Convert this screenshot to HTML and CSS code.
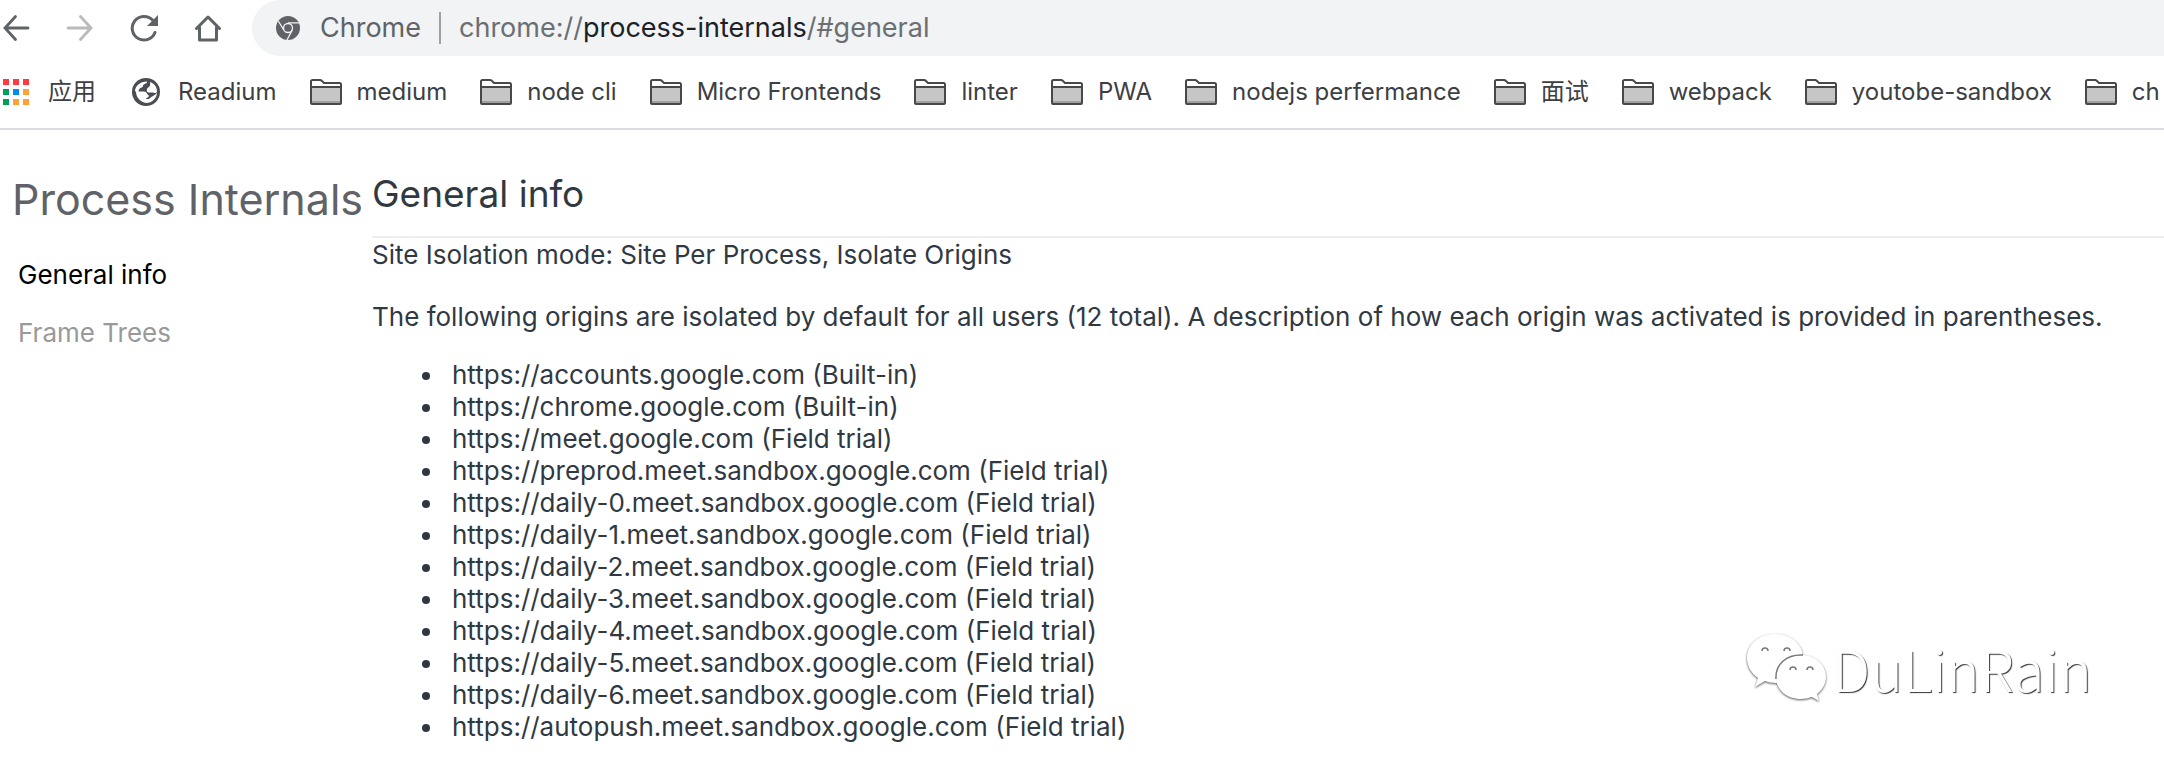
FILE: index.html
```html
<!DOCTYPE html>
<html lang="en">
<head>
  <meta charset="UTF-8">
  <meta name="viewport" content="width=device-width, initial-scale=1.0">
  <title>Process Internals</title>
  <link rel="stylesheet" href="styles.css">
</head>
<body>

  <!-- Shared icons -->
  <svg class="sprite" aria-hidden="true">
    <symbol id="folder" viewBox="0 0 32 26">
      <path d="M1 24V2.5Q1 1 2.5 1H10Q11 1 12 2L14 4H29.5Q31 4 31 5.500V24Q31 25 30 25H2Q1 25 1 24Z" fill="#fff"/>
      <path d="M1 8H31V25H1Z" fill="#c6c6c6"/>
      <path d="M1 22H31V24H1Z" fill="#a0a0a0"/>
      <path d="M1 8H31M1 24V2.500Q1 1 2.500 1H10Q11 1 12 2L14 4H29.500Q31 4 31 5.500V24Q31 25 30 25H2Q1 25 1 24Z" fill="none" stroke="#484848" stroke-width="2"/>
    </symbol>
  </svg>

  <!-- Browser toolbar -->
  <div class="toolbar">
    <button class="tool-btn" aria-label="Back">
      <svg viewBox="0 0 28 28"><path d="M26 14H3M13.500 2.500L3 14l10.500 11.500" fill="none" stroke="#5f6368" stroke-width="2.800" stroke-linecap="round"/></svg>
    </button>
    <button class="tool-btn" aria-label="Forward" disabled>
      <svg viewBox="0 0 28 28"><path d="M2 14H25M14.500 2.500L25 14 14.500 25.500" fill="none" stroke="#bababa" stroke-width="2.800" stroke-linecap="round"/></svg>
    </button>
    <button class="tool-btn" aria-label="Reload">
      <svg viewBox="0 0 28 28"><path d="M25 18.500A11.800 11.800 0 1 1 22.500 6" fill="none" stroke="#5f6368" stroke-width="3" stroke-linecap="round"/><path d="M28 1V12H17Z" fill="#5f6368"/></svg>
    </button>
    <button class="tool-btn" aria-label="Home">
      <svg viewBox="0 0 28 28"><path d="M2.500 14.500L14 3l11.500 11.500M5.500 13V26H22.500V13" fill="none" stroke="#5f6368" stroke-width="3" stroke-linecap="round" stroke-linejoin="round"/></svg>
    </button>
    <div class="omnibox">
      <svg class="chrome-icon" viewBox="0 0 24 24">
        <circle cx="12" cy="12" r="12" fill="#5f6368"/>
        <circle cx="12" cy="12" r="4.500" fill="none" stroke="#f1f3f4" stroke-width="1.300"/>
        <path d="M12 6.800H23M7.800 14L2.300 5M16.300 14L11 24" fill="none" stroke="#f1f3f4" stroke-width="1.300"/>
      </svg>
      <span class="chip">Chrome</span>
      <div class="url" role="textbox" aria-label="Address and search bar" contenteditable="true" spellcheck="false">chrome://<span class="host">process-internals</span>/#general</div>
    </div>
  </div>

  <!-- Bookmarks bar -->
  <nav class="bookmarks">
    <a href="#apps">
      <svg class="apps-icon" viewBox="0 0 26 26">
        <path d="M0 0h6v6H0zM10 0h6v6h-6zM20 0h6v6h-6z" fill="#ff3b41"/>
        <path d="M0 10h6v6H0zM0 20h6v6H0z" fill="#00a05a"/>
        <path d="M10 10h6v6h-6z" fill="#008cf0"/>
        <path d="M20 10h6v6h-6zM10 20h6v6h-6zM20 20h6v6h-6z" fill="#ffa138"/>
      </svg>应用</a>
    <a href="#readium">
      <svg class="globe-icon" viewBox="0 0 28 28">
        <circle cx="14" cy="14" r="14" fill="#4a4e53"/>
        <path d="M3 13.500C3 8 8 3.500 15 3.500C15.500 6 11 5.500 11 8C11 10 7 9 6.500 13.500ZM4 13.500H12C15 13.500 15 17 17 17.500C17 20 14 19 14 21V25C9 24 4 20 4 13.500Z" fill="#fff"/>
        <path d="M18 4C23 6 25 9 25 14C23 16 22 14 19 14.500C16 15 14 14 15 11C16 9 19 9 18 4ZM14 21H17C18 19 23 18 25 14.500C25 20 20 25 14 25Z" fill="#fff"/>
      </svg>Readium</a>
    <a href="#medium"><svg class="folder-icon"><use href="#folder"/></svg>medium</a>
    <a href="#node-cli"><svg class="folder-icon"><use href="#folder"/></svg>node cli</a>
    <a href="#micro-frontends"><svg class="folder-icon"><use href="#folder"/></svg>Micro Frontends</a>
    <a href="#linter"><svg class="folder-icon"><use href="#folder"/></svg>linter</a>
    <a href="#pwa"><svg class="folder-icon"><use href="#folder"/></svg>PWA</a>
    <a href="#nodejs"><svg class="folder-icon"><use href="#folder"/></svg>nodejs perfermance</a>
    <a href="#interview"><svg class="folder-icon"><use href="#folder"/></svg>面试</a>
    <a href="#webpack"><svg class="folder-icon"><use href="#folder"/></svg>webpack</a>
    <a href="#youtobe"><svg class="folder-icon"><use href="#folder"/></svg>youtobe-sandbox</a>
    <a href="#ch"><svg class="folder-icon"><use href="#folder"/></svg>ch</a>
  </nav>

  <!-- Page -->
  <div class="page">
    <div class="sidebar">
      <h1>Process Internals</h1>
      <ul class="tabs">
        <li><a class="selected" href="#general">General info</a></li>
        <li><a href="#web-contents">Frame Trees</a></li>
      </ul>
    </div>

    <div class="content">
      <h2>General info</h2>
      <p class="mode">Site Isolation mode: Site Per Process, Isolate Origins</p>
      <p>The following origins are isolated by default for all users (12 total). A description of how each origin was activated is provided in parentheses.</p>
      <ul class="origins">
        <li>https://accounts.google.com (Built-in)</li>
        <li>https://chrome.google.com (Built-in)</li>
        <li>https://meet.google.com (Field trial)</li>
        <li>https://preprod.meet.sandbox.google.com (Field trial)</li>
        <li>https://daily-0.meet.sandbox.google.com (Field trial)</li>
        <li>https://daily-1.meet.sandbox.google.com (Field trial)</li>
        <li>https://daily-2.meet.sandbox.google.com (Field trial)</li>
        <li>https://daily-3.meet.sandbox.google.com (Field trial)</li>
        <li>https://daily-4.meet.sandbox.google.com (Field trial)</li>
        <li>https://daily-5.meet.sandbox.google.com (Field trial)</li>
        <li>https://daily-6.meet.sandbox.google.com (Field trial)</li>
        <li>https://autopush.meet.sandbox.google.com (Field trial)</li>
      </ul>
    </div>
  </div>

  <!-- Watermark -->
  <div class="watermark">
    <svg class="wechat" viewBox="0 0 82 70">
      <path d="M29 1C13 1 1 11 1 25C1 33 5 40 12 45L9 54L19 48C22 49 26 50 30 50C46 50 57 39 57 25C57 11 45 1 29 1Z"/>
      <path class="front" d="M55 22C41 22 30 31 30 44C30 57 41 66 55 66C59 66 62 65 66 64L73 68L71 61C76 57 80 51 80 44C80 31 69 22 55 22Z"/>
      <path class="edge" d="M30 46C29 31 41 21 57 22"/>
      <path class="eyes" d="M16 18A3 3 0 0 1 22 18M38 18A3 3 0 0 1 44 18M44 37A3 3 0 0 1 50 37M61 37A3 3 0 0 1 67 37"/>
    </svg>
    <span>DuLinRain</span>
  </div>

</body>
</html>
```
FILE: styles.css
```css
body {
  margin: 0;
  background-color: #fff;
  color: #303942;
  font-family: Inter, "Noto Sans CJK SC", sans-serif;
  font-size: 26px;
  line-height: 32px;
}
a {
  color: inherit;
  text-decoration: none;
}
.sprite {
  position: absolute;
  width: 0;
  height: 0;
}

/* Toolbar */
.toolbar {
  display: flex;
  align-items: center;
  height: 56px;
  padding-left: 2px;
  gap: 36px;
}
.tool-btn {
  flex: none;
  width: 28px;
  height: 28px;
  padding: 0;
  border: none;
  background: none;
}
.tool-btn svg {
  display: block;
  width: 28px;
  height: 28px;
}
.omnibox {
  flex: 1;
  display: flex;
  align-items: center;
  height: 56px;
  margin-left: -6px;
  padding-left: 24px;
  border-radius: 28px 0 0 28px;
  background-color: #f1f3f4;
  color: #5f6368;
  font-size: 27px;
}
.chrome-icon {
  width: 24px;
  height: 24px;
  margin-right: 20px;
}
.chip {
  padding-right: 18px;
  border-right: 2px solid #9aa0a6;
}
.url {
  padding-left: 18px;
  color: #6b6f73;
  outline: none;
}
.host {
  color: #202124;
}

/* Bookmarks bar */
.bookmarks {
  display: flex;
  align-items: center;
  gap: 33px;
  height: 72px;
  padding-left: 3px;
  border-bottom: 2px solid #dadce0;
  color: #3c4043;
  font-size: 24px;
  white-space: nowrap;
  overflow: hidden;
}
.bookmarks a {
  flex: none;
  display: flex;
  align-items: center;
}
.apps-icon {
  width: 26px;
  height: 26px;
  margin-right: 19px;
}
.globe-icon {
  width: 28px;
  height: 28px;
  margin: 0 18px 0 3px;
}
.folder-icon {
  width: 32px;
  height: 26px;
  margin-right: 15px;
}

/* Page */
.page {
  display: flex;
}
.sidebar {
  flex: none;
  width: 372px;
}
h1 {
  margin: 41px 0 0;
  padding-left: 12px;
  color: #5f6368;
  font-size: 43px;
  font-weight: 400;
  line-height: 56px;
  white-space: nowrap;
}
.tabs {
  margin: 19px 0 0;
  padding: 0 0 0 18px;
  list-style: none;
}
.tabs li {
  padding: 13px 0;
  color: #999;
}
.tabs .selected {
  color: #000;
}
.content {
  flex: 1;
}
h2 {
  margin: 0 0 1px;
  padding: 40px 0 18px;
  border-bottom: 2px solid #eee;
  font-size: 37px;
  font-weight: 400;
  line-height: 48px;
}
.content p {
  margin: 0 0 26px;
}
.content .mode {
  margin-bottom: 30px;
}
.origins {
  margin: 0;
  padding-left: 73px;
}
.origins li {
  padding-left: 7px;
}

/* Watermark */
.watermark {
  position: absolute;
  right: 72px;
  bottom: 56px;
  display: flex;
  align-items: center;
  gap: 4px;
  color: #fff;
  font-family: "Noto Sans CJK SC", sans-serif;
  font-size: 56px;
  font-weight: 300;
  line-height: 80px;
  text-shadow: 1px 1px 1px #333;
}
.wechat {
  width: 82px;
  height: 70px;
  fill: #fff;
  filter: drop-shadow(0 1px 1px #555);
}
.edge,
.eyes {
  fill: none;
  stroke: #777;
  stroke-width: 1.5;
}
```
